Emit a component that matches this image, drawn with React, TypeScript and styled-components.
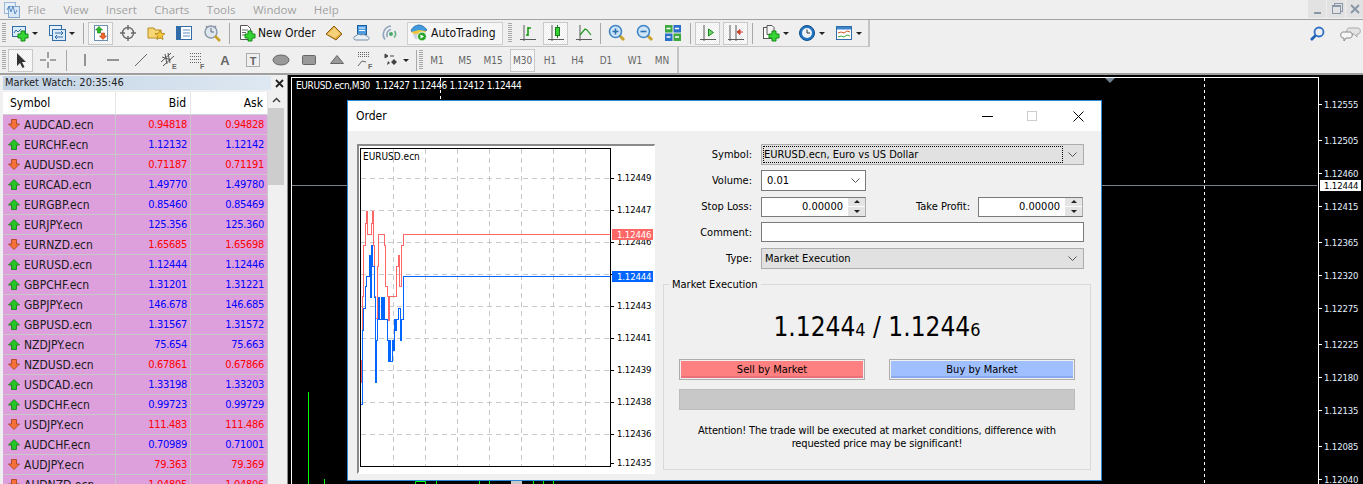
import React from "react";
import styled, { createGlobalStyle } from "styled-components";

const GlobalStyle = createGlobalStyle`
  html, body { margin: 0; padding: 0; background: #000; }
  body {
    font-family: "DejaVu Sans", "Noto Sans", sans-serif;
    font-stretch: condensed;
    font-size: 11px;
    color: #000;
  }
`;

type Quote = { symbol: string; bid: string; ask: string; up: boolean };

const quotes: Quote[] = [
  { symbol: "AUDCAD.ecn", bid: "0.94818", ask: "0.94828", up: false },
  { symbol: "EURCHF.ecn", bid: "1.12132", ask: "1.12142", up: true },
  { symbol: "AUDUSD.ecn", bid: "0.71187", ask: "0.71191", up: false },
  { symbol: "EURCAD.ecn", bid: "1.49770", ask: "1.49780", up: true },
  { symbol: "EURGBP.ecn", bid: "0.85460", ask: "0.85469", up: true },
  { symbol: "EURJPY.ecn", bid: "125.356", ask: "125.360", up: true },
  { symbol: "EURNZD.ecn", bid: "1.65685", ask: "1.65698", up: false },
  { symbol: "EURUSD.ecn", bid: "1.12444", ask: "1.12446", up: true },
  { symbol: "GBPCHF.ecn", bid: "1.31201", ask: "1.31221", up: true },
  { symbol: "GBPJPY.ecn", bid: "146.678", ask: "146.685", up: true },
  { symbol: "GBPUSD.ecn", bid: "1.31567", ask: "1.31572", up: true },
  { symbol: "NZDJPY.ecn", bid: "75.654", ask: "75.663", up: true },
  { symbol: "NZDUSD.ecn", bid: "0.67861", ask: "0.67866", up: false },
  { symbol: "USDCAD.ecn", bid: "1.33198", ask: "1.33203", up: true },
  { symbol: "USDCHF.ecn", bid: "0.99723", ask: "0.99729", up: true },
  { symbol: "USDJPY.ecn", bid: "111.483", ask: "111.486", up: false },
  { symbol: "AUDCHF.ecn", bid: "0.70989", ask: "0.71001", up: true },
  { symbol: "AUDJPY.ecn", bid: "79.363", ask: "79.369", up: false },
  { symbol: "AUDNZD.ecn", bid: "1.04805", ask: "1.04806", up: false },
];

const menus = ["File", "View", "Insert", "Charts", "Tools", "Window", "Help"];
const periods = [
  { label: "M1", w: 28 },
  { label: "M5", w: 28 },
  { label: "M15", w: 28 },
  { label: "M30", w: 25, ml: 3, active: true },
  { label: "H1", w: 28, ml: 1 },
  { label: "H4", w: 27 },
  { label: "D1", w: 30 },
  { label: "W1", w: 28 },
  { label: "MN", w: 26 },
];

const mainAxis = [
  { v: "1.12555", h: 36 },
  { v: "1.12505", h: 33 },
  { v: "1.12460", h: 33 },
  { v: "1.12415", h: 36 },
  { v: "1.12365", h: 33 },
  { v: "1.12320", h: 33 },
  { v: "1.12275", h: 36 },
  { v: "1.12225", h: 33 },
  { v: "1.12180", h: 33 },
  { v: "1.12135", h: 36 },
  { v: "1.12085", h: 33 },
  { v: "1.12040", h: 33 },
];

// the fourth row has no label of its own: the bid tag sits on it
const miniAxis = [
  { v: "1.12449", h: 32 },
  { v: "1.12447", h: 32 },
  { v: "1.12446", h: 32 },
  { v: "", h: 32 },
  { v: "1.12443", h: 32 },
  { v: "1.12441", h: 32 },
  { v: "1.12439", h: 32 },
  { v: "1.12438", h: 32 },
  { v: "1.12436", h: 29 },
  { v: "1.12435", h: 12 },
];

// tick traces, in the 3x coordinates they were read off at
const askTrace =
  "M48 760V690H52V500H56V345H60V280H64V245H67V312H78V280H82V245H85V345H88V500H92V565H96V410H100V312H118V345H122V470H126V500H130V570H134V500H155V410H160V375H164V470H170V345H175V313H797";
const bidTrace =
  "M48 822H53V600H56V535H60V470H64V438H72V375H76V503H79V345H83V408H87V503H90V630H92V758H94V630H97V568H100V503H104V568H108V503H112V568H116V503H119V568H126V630H129V695H133V630H136V695H141V630H144V662H147V568H151V600H155V568H161V535H165V630H170V568H175V439H797";

const Svg = styled.svg`
  display: block;
  flex: none;
`;

const Icon = ({ size = 18, children }: { size?: number; children: React.ReactNode }) => (
  <Svg width={size} height={size} viewBox="0 0 18 18">
    {children}
  </Svg>
);

const Plus = () => (
  <path d="M10 7h4v3h3v4h-3v3h-4v-3H7v-4h3z" fill="#35d535" stroke="#148a14" strokeWidth="1" />
);

const Axes = () => <path d="M5 1v16M1 15.5h16" stroke="#5a5a5a" strokeWidth="1" fill="none" />;

const Lens = ({ children }: { children?: React.ReactNode }) => (
  <>
    <path d="M11 11l5 5" stroke="#c9a227" strokeWidth="3" />
    <circle cx="7.5" cy="7.5" r="6" fill="#cfe4f7" stroke="#3f86c8" strokeWidth="1.6" />
    {children}
  </>
);

const NewChartIcon = () => (
  <Icon>
    <rect x="1.5" y="2.5" width="13" height="10" fill="#dcebf8" stroke="#2f6ca8" />
    <path d="M3 9l2-3 2 2 3-3" stroke="#2f6ca8" fill="none" />
    <Plus />
  </Icon>
);
const ProfilesIcon = () => (
  <Icon>
    <rect x="1.5" y="1.5" width="12" height="10" fill="#e8f1fa" stroke="#2f6ca8" />
    <rect x="4.5" y="5.5" width="13" height="11" fill="#dcebf8" stroke="#2f6ca8" />
    <path d="M7 9h8M7 13h8M13 7l2 2-2 2M9 11l-2 2 2 2" stroke="#2f6ca8" fill="none" />
  </Icon>
);
const WatchIcon = () => (
  <Icon>
    <rect x="2.5" y="1.5" width="13" height="15" fill="#fff" stroke="#6d8fb0" />
    <path d="M7 2.5l3.5 3.5H8.5v3h-3V6H3.5z" fill="#28b828" stroke="#137a13" strokeWidth=".6" />
    <path d="M11 15.5l-3.5-3.5h2V9h3v3h2z" fill="#f2652b" stroke="#b03a10" strokeWidth=".6" />
  </Icon>
);
const NavigatorIcon = () => (
  <Icon>
    <circle cx="9" cy="9" r="5.5" fill="none" stroke="#6a6a6a" strokeWidth="1.4" />
    <path d="M9 1v5M9 12v5M1 9h5M12 9h5" stroke="#6a6a6a" strokeWidth="1.4" />
  </Icon>
);
const FolderStarIcon = () => (
  <Icon>
    <path d="M1 4h6l1 2h6v8H1z" fill="#f7d774" stroke="#b98a1e" />
    <path d="M13 6l1.4 3.3 3.6.3-2.7 2.4.8 3.5-3.1-1.9-3.1 1.9.8-3.5L8 9.6l3.6-.3z" fill="#f5c83c" stroke="#a9811c" strokeWidth=".8" />
  </Icon>
);
const TerminalIcon = () => (
  <Icon>
    <rect x="1.5" y="2.5" width="15" height="13" fill="#fff" stroke="#2f6ca8" />
    <rect x="2" y="3" width="4" height="12" fill="#2f6ca8" />
    <path d="M8 6h7M8 9h7M8 12h7" stroke="#5b8fc4" />
  </Icon>
);
const TesterIcon = () => (
  <Icon>
    <path d="M3 2l2 2M13 2l-2 2" stroke="#8a8f98" strokeWidth="1.5" />
    <circle cx="8" cy="8" r="6" fill="#dfe6ee" stroke="#8a97a8" strokeWidth="1.4" />
    <path d="M8 4v4h3" stroke="#5e6b7a" fill="none" />
    <path d="M12 12l5 5" stroke="#c9a227" strokeWidth="2.6" />
  </Icon>
);
const NewOrderIcon = () => (
  <Icon>
    <path d="M2.5 1.5h7l3 3v11h-10z" fill="#fff" stroke="#555" />
    <path d="M4 6h6M4 8.5h4M4 11h3" stroke="#666" />
    <Plus />
  </Icon>
);
const BookIcon = () => (
  <Icon>
    <path d="M1 10l8-8 8 8-6 6z" fill="#e0a63c" stroke="#8a5b14" />
    <path d="M2.5 10l7-6.5 5.5 6-5 4.5z" fill="#f5d27a" />
  </Icon>
);
const CloudIcon = () => (
  <Icon>
    <rect x="4.5" y="1.5" width="9" height="9" fill="#4b9be0" stroke="#1e5f9e" />
    <path d="M6 4h6M6 6.5h6" stroke="#fff" />
    <path d="M3 16c-3 0-3-4 0-4 1-2 4-2 5-1 2-1 5 0 5 1 4 0 4 4 1 4z" fill="#e6eef6" stroke="#7a8ea3" />
  </Icon>
);
const SignalIcon = () => (
  <Icon>
    <circle cx="10" cy="10" r="2" fill="#4aa86a" />
    <path d="M6.5 13A5 5 0 0 1 10 5.5M4 15.5A8.5 8.5 0 0 1 10 2" stroke="#8fa6bd" strokeWidth="1.6" fill="none" />
    <path d="M13.5 7A5 5 0 0 1 13 13.5" stroke="#62b27f" strokeWidth="1.6" fill="none" />
  </Icon>
);
const RobotIcon = () => (
  <Icon>
    <path d="M1 7c1-4 5-6 8-6s6 2 8 5l-4 3H4z" fill="#3f9bdc" stroke="#1e5f9e" strokeWidth=".7" />
    <path d="M1 8l8-2 7 1-2 3H4z" fill="#f0c63c" />
    <path d="M3 10h8v5H5z" fill="#c9d4de" />
    <circle cx="12" cy="12.5" r="4.5" fill="#2aa52a" stroke="#fff" />
    <path d="M10.5 10.5l3.5 2-3.5 2z" fill="#fff" />
  </Icon>
);
const BarsIcon = () => (
  <Icon>
    <Axes />
    <path d="M9 3v9M9 4h3M9 11H7" stroke="#1b9a1b" strokeWidth="1.6" fill="none" />
  </Icon>
);
const CandleIcon = () => (
  <Icon>
    <Axes />
    <path d="M10.5 1v13" stroke="#1b7a1b" />
    <rect x="8.5" y="3.5" width="4" height="8" fill="#34d034" stroke="#1b7a1b" />
  </Icon>
);
const LineChartIcon = () => (
  <Icon>
    <Axes />
    <path d="M5 11l5-6 2 1 4 5" stroke="#1b9a1b" strokeWidth="1.2" fill="none" />
  </Icon>
);
const ZoomInIcon = () => (
  <Icon>
    <Lens>
      <path d="M4.5 7.5h6M7.5 4.5v6" stroke="#2a6fb0" strokeWidth="1.6" />
    </Lens>
  </Icon>
);
const ZoomOutIcon = () => (
  <Icon>
    <Lens>
      <path d="M4.5 7.5h6" stroke="#2a6fb0" strokeWidth="1.6" />
    </Lens>
  </Icon>
);
const TileIcon = () => (
  <Icon>
    <rect x="1" y="1" width="7.5" height="7.5" fill="#3fa83f" />
    <rect x="9.5" y="1" width="7.5" height="7.5" fill="#2a6fc8" />
    <rect x="1" y="9.5" width="7.5" height="7.5" fill="#2a6fc8" />
    <rect x="9.5" y="9.5" width="7.5" height="7.5" fill="#3fa83f" />
    <path d="M2.5 4.5h4M11 4.5h4M2.5 13h4M11 13h4" stroke="#fff" strokeWidth="1.6" />
  </Icon>
);
const AutoScrollIcon = () => (
  <Icon>
    <Axes />
    <path d="M9.5 5l5 3.5-5 3.5z" fill="#6fd66f" stroke="#1b8a1b" />
  </Icon>
);
const ShiftIcon = () => (
  <Icon>
    <path d="M3 1v16M9 1v16M1 15.5h16" stroke="#5a5a5a" fill="none" />
    <path d="M16 8h-3M13 5.5L10 8l3 2.5z" stroke="#c0392b" fill="#e04a2f" />
  </Icon>
);
const IndicatorIcon = () => (
  <Icon>
    <rect x="1.5" y="3.5" width="9" height="11" fill="#fff" stroke="#555" />
    <path d="M5 1.5h5l2 2v7H5z" fill="#f4f4f4" stroke="#555" />
    <Plus />
  </Icon>
);
const ClockIcon = () => (
  <Icon>
    <circle cx="9" cy="9" r="7.5" fill="#1f74c4" stroke="#124f8a" />
    <circle cx="9" cy="9" r="5" fill="#eef3f8" />
    <path d="M9 5.5V9h3" stroke="#333" fill="none" />
  </Icon>
);
const TemplateIcon = () => (
  <Icon>
    <rect x="1.5" y="2.5" width="15" height="13" fill="#fff" stroke="#2f6ca8" />
    <rect x="2" y="3" width="14" height="2.5" fill="#3e86cc" />
    <path d="M3 9l3-1 3 1 3-2 3 1" stroke="#d05a2c" fill="none" />
    <path d="M3 13l3-1 3 1 3-2 3 1" stroke="#3fa83f" fill="none" />
  </Icon>
);
const PointerIcon = () => (
  <Icon>
    <path d="M5 2v13l3-3 2.5 5 2-1-2.5-5h4z" fill="#333" />
  </Icon>
);
const CrossIcon = () => (
  <Icon>
    <path d="M9 1v6M9 11v6M1 9h6M11 9h6" stroke="#555" />
  </Icon>
);
const VLineIcon = () => (
  <Icon>
    <path d="M9 3v12" stroke="#555" strokeWidth="1.2" />
  </Icon>
);
const HLineIcon = () => (
  <Icon>
    <path d="M3 9h12" stroke="#555" strokeWidth="1.2" />
  </Icon>
);
const TrendIcon = () => (
  <Icon>
    <path d="M3 15L15 3" stroke="#666" />
  </Icon>
);
const LetterIcon = ({ letter, x = 12 }: { letter: string; x?: number }) => (
  <text x={x} y="17.5" fontSize="7" fontWeight="700" fill="#666" fontFamily="Liberation Sans, sans-serif">
    {letter}
  </text>
);
const ChannelIcon = () => (
  <Icon>
    <path d="M1 11L11 2M3 15L14 5M5 3l2 10M8 2l2 10M2 6l9 3" stroke="#555" fill="none" />
    <LetterIcon letter="E" />
  </Icon>
);
const FiboIcon = () => (
  <Icon>
    <path d="M2 2.5h12M2 5.5h12M2 8.5h12M2 11.5h12" stroke="#666" strokeDasharray="1 1" />
    <LetterIcon letter="F" />
  </Icon>
);
const TextIcon = () => (
  <Icon>
    <text x="9" y="14" textAnchor="middle" fontSize="13" fontWeight="700" fill="#666" fontFamily="Liberation Sans, sans-serif">
      A
    </text>
  </Icon>
);
const LabelIcon = () => (
  <Icon>
    <rect x="2.5" y="2.5" width="13" height="13" fill="none" stroke="#666" strokeDasharray="1 1" />
    <text x="9" y="13.5" textAnchor="middle" fontSize="11" fontWeight="700" fill="#666" fontFamily="Liberation Sans, sans-serif">
      T
    </text>
  </Icon>
);
const EllipseIcon = () => (
  <Icon>
    <ellipse cx="9" cy="9" rx="8" ry="5" fill="#999" stroke="#666" />
  </Icon>
);
const RectIcon = () => (
  <Icon>
    <rect x="2.5" y="4.5" width="13" height="9" rx="1" fill="#999" stroke="#666" />
  </Icon>
);
const TriangleIcon = () => (
  <Icon>
    <path d="M9 4.5L15.5 12.5H2.5z" fill="#999" stroke="#666" />
  </Icon>
);
const FanIcon = () => (
  <Icon>
    <path d="M2 1.5h12M2 3.5h12M2 5.5h12" stroke="#666" strokeDasharray="1 1" />
    <path d="M2 15l4-5 4 1" stroke="#666" fill="none" />
    <LetterIcon letter="F" />
  </Icon>
);
const ArrowsIcon = () => (
  <Icon>
    <path d="M3 3l3 2-3 2zM8 5h4" fill="#444" stroke="#444" />
    <path d="M12 8l3 3-3 3-3-3zM8 12l-3 2 1-4z" fill="#444" />
  </Icon>
);
const MagnifierIcon = () => (
  <Icon>
    <circle cx="11" cy="7" r="4.5" fill="none" stroke="#2f6fc8" strokeWidth="1.8" />
    <path d="M7.5 10.5L3 15" stroke="#1f5fb5" strokeWidth="2.6" />
  </Icon>
);
const ChatIcon = () => (
  <Svg width="22" height="16" viewBox="0 0 22 16">
    <path d="M9 2h9c3 0 3 6 0 6h-1v3l-3-3H9C6 8 6 2 9 2z" fill="#e4e4e4" stroke="#a8a8a8" />
    <path d="M3 6h7c3 0 3 6 0 6H6l-2 3v-3H3C0 12 0 6 3 6z" fill="#f6f6f6" stroke="#888" />
  </Svg>
);
const AppIcon = () => (
  <Svg width="16" height="16" viewBox="0 0 16 16">
    <rect x=".5" y=".5" width="11" height="11" fill="#e7eff8" stroke="#9db9d8" />
    <rect x="4.5" y="4.5" width="11" height="11" fill="#d8e6f5" stroke="#86a8cc" />
    <path d="M3 8l2-4 2 6 2-6 2 8 2-4" stroke="#5d8fc4" fill="none" />
  </Svg>
);

const TrendArrow = ({ up }: { up: boolean }) => (
  <Svg width="12" height="11" viewBox="0 0 12 11">
    {up ? (
      <path d="M6 .5L11.5 6H8.5v4.5h-5V6H.5z" fill="#27c427" stroke="#137a13" strokeWidth=".8" />
    ) : (
      <path d="M6 10.5L11.5 5H8.5V.5h-5V5H.5z" fill="#f4713a" stroke="#a83c12" strokeWidth=".8" />
    )}
  </Svg>
);

const Chevron = () => (
  <Svg width="9" height="5" viewBox="0 0 9 5">
    <path d="M.5.5l4 4 4-4" stroke="#555" fill="none" />
  </Svg>
);

const Spinner = () => (
  <Spin>
    <SpinValue>0.00000</SpinValue>
    <SpinButtons>
      <SpinButton>
        <SpinUp />
      </SpinButton>
      <SpinButton>
        <SpinDown />
      </SpinButton>
    </SpinButtons>
  </Spin>
);

const App = () => (
  <Page>
    <GlobalStyle />
    <MenuBar>
      <AppLogo>
        <AppIcon />
      </AppLogo>
      {menus.map((m) => (
        <MenuItem key={m}>{m}</MenuItem>
      ))}
      <WindowButtons>
        <WindowButton>
          <MinGlyph />
        </WindowButton>
        <WindowButton>
          <RestoreGlyph />
        </WindowButton>
        <WindowButton>
          <Svg width="10" height="10" viewBox="0 0 10 10">
            <path d="M1 1l8 8M9 1l-8 8" stroke="#8a97a8" strokeWidth="2" />
          </Svg>
        </WindowButton>
      </WindowButtons>
    </MenuBar>

    <ToolRow>
      <ToolGroup $h={27}>
        <Grip $ml={2} />
        <Tool $w={36} $pl={5}>
          <NewChartIcon />
          <Caret />
        </Tool>
        <Tool $w={36} $pl={6}>
          <ProfilesIcon />
          <Caret />
        </Tool>
        <Sep $ml={5} $mr={4} />
        <Tool $w={25} $active>
          <WatchIcon />
        </Tool>
        <Tool $w={28} $ml={1}>
          <NavigatorIcon />
        </Tool>
        <Tool $w={28}>
          <FolderStarIcon />
        </Tool>
        <Tool $w={28}>
          <TerminalIcon />
        </Tool>
        <Tool $w={28}>
          <TesterIcon />
        </Tool>
        <Sep $ml={3} $mr={3} />
        <Tool $w={87} $pl={5}>
          <NewOrderIcon />
          <ToolLabel $gap={2}>New Order</ToolLabel>
        </Tool>
        <Tool $w={28}>
          <BookIcon />
        </Tool>
        <Tool $w={28}>
          <CloudIcon />
        </Tool>
        <Tool $w={28}>
          <SignalIcon />
        </Tool>
        <AutoButton>
          <RobotIcon />
          <ToolLabel $gap={3}>AutoTrading</ToolLabel>
        </AutoButton>
        <Grip $ml={5} />
        <Tool $w={28} $ml={2}>
          <BarsIcon />
        </Tool>
        <Tool $w={25} $ml={1} $active>
          <CandleIcon />
        </Tool>
        <Tool $w={28} $ml={2}>
          <LineChartIcon />
        </Tool>
        <Sep $ml={2} $mr={2} />
        <Tool $w={28}>
          <ZoomInIcon />
        </Tool>
        <Tool $w={28}>
          <ZoomOutIcon />
        </Tool>
        <Tool $w={28}>
          <TileIcon />
        </Tool>
        <Sep $ml={3} $mr={4} />
        <Tool $w={25} $active>
          <AutoScrollIcon />
        </Tool>
        <Tool $w={25} $ml={3} $active>
          <ShiftIcon />
        </Tool>
        <Sep $ml={4} $mr={2} />
        <Tool $w={36} $pl={7}>
          <IndicatorIcon />
          <Caret />
        </Tool>
        <Tool $w={36} $pl={7}>
          <ClockIcon />
          <Caret />
        </Tool>
        <Tool $w={36} $pl={8}>
          <TemplateIcon />
          <Caret />
        </Tool>
      </ToolGroup>
      <RightTools>
        <MagnifierIcon />
        <ChatIcon />
      </RightTools>
    </ToolRow>

    <ToolRow>
      <ToolGroup $h={26} $noBottom $width={679}>
        <Grip $ml={2} />
        <Tool $w={25} $ml={2} $active>
          <PointerIcon />
        </Tool>
        <Tool $w={28} $ml={1}>
          <CrossIcon />
        </Tool>
        <Sep $ml={4} $mr={4} />
        <Tool $w={28}>
          <VLineIcon />
        </Tool>
        <Tool $w={28}>
          <HLineIcon />
        </Tool>
        <Tool $w={28}>
          <TrendIcon />
        </Tool>
        <Tool $w={28}>
          <ChannelIcon />
        </Tool>
        <Tool $w={28}>
          <FiboIcon />
        </Tool>
        <Tool $w={28}>
          <TextIcon />
        </Tool>
        <Tool $w={28}>
          <LabelIcon />
        </Tool>
        <Tool $w={28}>
          <EllipseIcon />
        </Tool>
        <Tool $w={28}>
          <RectIcon />
        </Tool>
        <Tool $w={28}>
          <TriangleIcon />
        </Tool>
        <Tool $w={28}>
          <FanIcon />
        </Tool>
        <Tool $w={36} $pl={3}>
          <ArrowsIcon />
          <Caret />
        </Tool>
        <Sep $ml={1} $mr={2} />
        <Grip $ml={0} />
        {periods.map((p) => (
          <Tool key={p.label} $w={p.w} $ml={p.ml} $active={p.active}>
            <PeriodLabel>{p.label}</PeriodLabel>
          </Tool>
        ))}
      </ToolGroup>
    </ToolRow>

    <Workspace>
      <MarketWatch>
        <WatchHead>
          <WatchTitle>Market Watch: 20:35:46</WatchTitle>
          <WatchClose>
            <Svg width="9" height="9" viewBox="0 0 9 9">
              <path d="M1 1l7 7M8 1L1 8" stroke="#222" strokeWidth="1.8" />
            </Svg>
          </WatchClose>
        </WatchHead>
        <WatchBody>
          <Table>
            <HeadCell>Symbol</HeadCell>
            <HeadCell $right>Bid</HeadCell>
            <HeadCell $right>Ask</HeadCell>
            {quotes.map((q) => (
              <React.Fragment key={q.symbol}>
                <SymbolCell>
                  <TrendArrow up={q.up} />
                  {q.symbol}
                </SymbolCell>
                <PriceCell $up={q.up}>{q.bid}</PriceCell>
                <PriceCell $up={q.up}>{q.ask}</PriceCell>
              </React.Fragment>
            ))}
          </Table>
          <Scrollbar>
            <ScrollUp>
              <Svg width="9" height="6" viewBox="0 0 9 6">
                <path d="M1 5l3.5-3.5L8 5" stroke="#444" strokeWidth="1.5" fill="none" />
              </Svg>
            </ScrollUp>
            <ScrollThumb />
          </Scrollbar>
        </WatchBody>
      </MarketWatch>

      <ChartWindow>
        <Plot>
          <Svg width="1025" height="407" viewBox="293 78 1025 407">
            <path d="M293 185.5H1318" stroke="#77808a" />
            <path d="M441.5 78V100M1205.5 78V484" stroke="#fff" strokeDasharray="3 3" />
            <path d="M1106 78h10l-5 5z" fill="#708090" />
            <path
              d="M309.5 392V484M325.5 479V484M416.5 484V481.5H426.5V484M437.5 481V484M480.5 481V484M490.5 481V484M534.5 481V484M544.5 481V484M554.5 481V484"
              stroke="#00ff00"
              fill="none"
            />
            <rect x="512" y="481" width="11" height="3" fill="#c8c8c8" />
          </Svg>
          <PlotCaption>EURUSD.ecn,M30&nbsp; 1.12427 1.12446 1.12412 1.12444</PlotCaption>
        </Plot>
        <PriceAxis>
          {mainAxis.map((t) => (
            <AxisRow key={t.v} $h={t.h}>
              {t.v}
            </AxisRow>
          ))}
          <LastPrice>1.12444</LastPrice>
        </PriceAxis>
      </ChartWindow>
    </Workspace>

    <Dialog>
      <TitleBar>
        <DialogTitle>Order</DialogTitle>
        <TitleButton $w={44}>
          <Svg width="11" height="1" viewBox="0 0 11 1">
            <path d="M0 .5h11" stroke="#000" />
          </Svg>
        </TitleButton>
        <TitleButton $w={46}>
          <Svg width="10" height="10" viewBox="0 0 10 10">
            <rect x=".5" y=".5" width="9" height="9" fill="none" stroke="#ccc" />
          </Svg>
        </TitleButton>
        <TitleButton $w={46}>
          <Svg width="11" height="11" viewBox="0 0 11 11">
            <path d="M.5.5l10 10M10.5.5l-10 10" stroke="#000" />
          </Svg>
        </TitleButton>
      </TitleBar>
      <DialogBody>
        <MiniPanel>
          <MiniPlot>
            <MiniCaption>EURUSD.ecn</MiniCaption>
            <Svg width="249" height="317" viewBox="48 57 747 951" shapeRendering="crispEdges">
              <path
                d="M145 57V1008M241 57V1008M337 57V1008M433 57V1008M529 57V1008M625 57V1008M721 57V1008M48 145H795M48 241H795M48 337H795M48 433H795M48 529H795M48 625H795M48 721H795M48 817H795M48 913H795"
                stroke="#c8c8c8"
                strokeWidth="3"
                strokeDasharray="15 12"
                fill="none"
              />
              <path d={askTrace} stroke="#ff6666" strokeWidth="3" fill="none" />
              <path d={bidTrace} stroke="#0066ff" strokeWidth="3" fill="none" />
            </Svg>
          </MiniPlot>
          <MiniAxis>
            {miniAxis.map((t, i) => (
              <MiniTick key={i} $h={t.h}>
                {t.v}
              </MiniTick>
            ))}
            <PriceTag $top={81} $color="#ff6666">
              1.12446
            </PriceTag>
            <PriceTag $top={123} $color="#0066ff">
              1.12444
            </PriceTag>
          </MiniAxis>
        </MiniPanel>

        <OrderColumn>
          <FormGrid>
            <FieldLabel>Symbol:</FieldLabel>
            <Select>
              <FocusText>EURUSD.ecn, Euro vs US Dollar</FocusText>
              <Chevron />
            </Select>
            <FieldLabel>Volume:</FieldLabel>
            <Combo>
              0.01
              <Chevron />
            </Combo>
            <FieldLabel>Stop Loss:</FieldLabel>
            <StopsRow>
              <Spinner />
              <TakeLabel>Take Profit:</TakeLabel>
              <Spinner />
            </StopsRow>
            <FieldLabel>Comment:</FieldLabel>
            <TextInput />
            <FieldLabel>Type:</FieldLabel>
            <Select>
              <PlainText>Market Execution</PlainText>
              <Chevron />
            </Select>
          </FormGrid>

          <GroupBox>
            <GroupLegend>Market Execution</GroupLegend>
            <BigPrice>
              1.1244<small>4</small> / 1.1244<small>6</small>
            </BigPrice>
            <TradeButtons>
              <TradeButton $fill="#ff8080" $edge="#e96f78">
                Sell by Market
              </TradeButton>
              <TradeButton $fill="#a0bfff" $edge="#8aa8ec">
                Buy by Market
              </TradeButton>
            </TradeButtons>
            <ProgressBar />
            <Notice>
              Attention! The trade will be executed at market conditions, difference with
              <br />
              requested price may be significant!
            </Notice>
          </GroupBox>
        </OrderColumn>
      </DialogBody>
    </Dialog>
  </Page>
);

export default App;

const Page = styled.div`
  position: relative;
  width: 1363px;
  height: 484px;
  overflow: hidden;
  display: flex;
  flex-direction: column;
  background: #efefef;
`;

const MenuBar = styled.div`
  height: 19px;
  flex: none;
  display: flex;
  align-items: center;
  gap: 17.5px;
  border-bottom: 1px solid #a3a3a3;
  font-family: "Open Sans", sans-serif;
  font-stretch: normal;
  font-size: 11.5px;
  color: #a2a2a2;
`;

const AppLogo = styled.div`
  margin-left: 4px;
  margin-right: -10px;
  width: 16px;
`;

const MenuItem = styled.span`
  line-height: 19px;
`;

const WindowButtons = styled.div`
  margin-left: auto;
  margin-right: -1px;
  display: flex;
  gap: 1px;
  align-self: flex-start;
`;

const WindowButton = styled.div`
  width: 18px;
  height: 18px;
  background: #e2e2e2;
  display: flex;
  align-items: center;
  justify-content: center;
`;

const MinGlyph = styled.i`
  width: 7px;
  height: 2px;
  margin-top: 7px;
  background: #8a97a8;
`;

const RestoreGlyph = styled.i`
  width: 7px;
  height: 6px;
  border: 1px solid #8a97a8;
  border-top-width: 2px;
  box-shadow: 2px -2px 0 -1px #e2e2e2, 2px -2px 0 0 #8a97a8;
`;

const ToolRow = styled.div`
  display: flex;
  flex: none;
  align-items: stretch;
`;

const ToolGroup = styled.div<{ $h: number; $noBottom?: boolean; $width?: number }>`
  height: ${(p) => p.$h}px;
  width: ${(p) => (p.$width ? `${p.$width}px` : "auto")};
  display: flex;
  align-items: center;
  box-sizing: border-box;
  border-right: 2px solid #c4c4c4;
  border-bottom: ${(p) => (p.$noBottom ? "none" : "1px solid #c4c4c4")};
  padding-right: 5px;
`;

const RightTools = styled.div`
  margin-left: auto;
  display: flex;
  align-items: center;
  gap: 14px;
  padding-right: 1px;
  height: 27px;
`;

const Grip = styled.i<{ $ml: number }>`
  flex: none;
  width: 4px;
  height: 20px;
  margin-left: ${(p) => p.$ml}px;
  background: repeating-linear-gradient(180deg, #a8a8a8 0 1px, transparent 1px 2px);
`;

const Sep = styled.i<{ $ml: number; $mr: number }>`
  flex: none;
  width: 1px;
  height: 21px;
  margin-left: ${(p) => p.$ml}px;
  margin-right: ${(p) => p.$mr}px;
  background: #a8a8a8;
`;

const Tool = styled.div<{ $w: number; $ml?: number; $pl?: number; $active?: boolean }>`
  flex: none;
  box-sizing: border-box;
  width: ${(p) => p.$w}px;
  height: 23px;
  margin-left: ${(p) => p.$ml || 0}px;
  padding-left: ${(p) => p.$pl || 0}px;
  display: flex;
  align-items: center;
  justify-content: ${(p) => (p.$pl ? "flex-start" : "center")};
  ${(p) =>
    p.$active &&
    `
    border: 1px solid #c9c9c9;
    background: repeating-conic-gradient(#fff 0 25%, #ececec 0 50%) 0 0 / 2px 2px;
  `}
`;

const Caret = styled.i`
  flex: none;
  margin-left: 3px;
  width: 0;
  height: 0;
  border-left: 3px solid transparent;
  border-right: 3px solid transparent;
  border-top: 3px solid #222;
`;

const ToolLabel = styled.span<{ $gap: number }>`
  margin-left: ${(p) => p.$gap}px;
  font-size: 12px;
  color: #111;
  white-space: nowrap;
`;

const PeriodLabel = styled.span`
  font-size: 10px;
  color: #666;
`;

const AutoButton = styled.div`
  flex: none;
  box-sizing: border-box;
  width: 96px;
  height: 23px;
  margin-left: 3px;
  padding-left: 2px;
  display: flex;
  align-items: center;
  border: 1px solid #cfcfcf;
  background: #f6f6f6;
`;

const Workspace = styled.div`
  flex: 1;
  min-height: 0;
  display: flex;
  border-top: 2px solid #a0a0a0;
`;

const MarketWatch = styled.div`
  flex: none;
  box-sizing: border-box;
  width: 288px;
  padding: 1px 0 0 3px;
  background: #f0f0f0;
  border-right: 1px solid #8c8c8c;
  overflow: hidden;
`;

const WatchHead = styled.div`
  display: flex;
  align-items: center;
`;

const WatchTitle = styled.div`
  width: 268px;
  height: 14px;
  line-height: 14px;
  padding-left: 2px;
  box-sizing: border-box;
  background: linear-gradient(90deg, #c3d3e4, #dee8f2);
  color: #222;
`;

const WatchClose = styled.div`
  flex: 1;
  display: flex;
  justify-content: center;
`;

const WatchBody = styled.div`
  margin-top: 2px;
  display: flex;
`;

const Table = styled.div`
  width: 265px;
  display: grid;
  grid-template-columns: 113px 75px 77px;
  grid-auto-rows: 20px;
`;

const HeadCell = styled.div<{ $right?: boolean }>`
  height: 23px;
  box-sizing: border-box;
  padding: 0 ${(p) => (p.$right ? "4px" : "0")} 0 ${(p) => (p.$right ? "0" : "7px")};
  display: flex;
  align-items: center;
  justify-content: ${(p) => (p.$right ? "flex-end" : "flex-start")};
  font-size: 12px;
  background: #fff;
  border-right: 1px solid #e6e6e6;
  border-bottom: 1px solid #d0d0d0;
  margin-bottom: -3px;
  z-index: 1;
`;

const BodyCell = styled.div`
  box-sizing: border-box;
  margin-top: 3px;
  height: 20px;
  display: flex;
  align-items: center;
  background: #dda0dd;
  border-right: 1px solid #c8c8c8;
  border-bottom: 1px solid #c8c8c8;
  font-size: 12px;
`;

const SymbolCell = styled(BodyCell)`
  gap: 4px;
  padding-left: 5px;
  color: #1a1a1a;
`;

const PriceCell = styled(BodyCell)<{ $up: boolean }>`
  justify-content: flex-end;
  padding-right: 3px;
  font-size: 11px;
  letter-spacing: -0.3px;
  color: ${(p) => (p.$up ? "#0000ff" : "#ff0000")};
`;

const Scrollbar = styled.div`
  width: 16px;
`;

const ScrollUp = styled.div`
  height: 16px;
  display: flex;
  align-items: center;
  justify-content: center;
`;

const ScrollThumb = styled.div`
  height: 77px;
  background: #cdcdcd;
`;

const ChartWindow = styled.div`
  flex: 1;
  min-width: 0;
  display: flex;
  padding: 2px 0 0 3px;
  background: #000;
`;

const Plot = styled.div`
  position: relative;
  flex: 1;
  min-width: 0;
  border-top: 1px solid #fff;
  border-left: 1px solid #fff;
  border-right: 1px solid #fff;
`;

const PlotCaption = styled.div`
  position: absolute;
  left: 4px;
  top: 1px;
  line-height: 14px;
  font-size: 10px;
  letter-spacing: -0.35px;
  color: #fff;
  white-space: pre;
`;

const PriceAxis = styled.div`
  position: relative;
  flex: none;
  width: 44px;
  padding-top: 21px;
  font-size: 9.5px;
  letter-spacing: -0.15px;
  color: #e4f0ff;
`;

const AxisRow = styled.div<{ $h: number }>`
  height: ${(p) => p.$h}px;
  line-height: 13px;
  padding-left: 5px;
  position: relative;
  &::before {
    content: "";
    position: absolute;
    left: 0;
    top: 6px;
    width: 3px;
    height: 1px;
    background: #fff;
  }
`;

const LastPrice = styled.div`
  position: absolute;
  left: 1px;
  top: 103px;
  width: 41px;
  height: 11px;
  padding-left: 4px;
  box-sizing: border-box;
  background: #fff;
  color: #000;
  line-height: 11px;
`;

const Dialog = styled.div`
  position: absolute;
  left: 347px;
  top: 100px;
  box-sizing: border-box;
  width: 755px;
  height: 381px;
  border: 1px solid #2a8ad6;
  background: #f0f0f0;
`;

const TitleBar = styled.div`
  height: 30px;
  display: flex;
  align-items: center;
  background: #fff;
`;

const DialogTitle = styled.div`
  flex: 1;
  padding-left: 8px;
  font-size: 12px;
`;

const TitleButton = styled.div<{ $w: number }>`
  width: ${(p) => p.$w}px;
  height: 30px;
  display: flex;
  align-items: center;
  justify-content: center;
`;

const DialogBody = styled.div`
  display: flex;
  padding: 13px 0 0 9px;
`;

const MiniPanel = styled.div`
  flex: none;
  box-sizing: border-box;
  width: 298px;
  height: 330px;
  display: flex;
  padding: 2px 0 0 1px;
  background: #fff;
  border-top: 2px solid #8a8a8a;
  border-left: 2px solid #8a8a8a;
  border-right: 1px solid #fff;
  border-bottom: 2px solid #fff;
`;

const MiniPlot = styled.div`
  position: relative;
  flex: none;
  width: 251px;
  height: 319px;
  box-sizing: border-box;
  border: 1px solid #000;
  background: #fff;
`;

const MiniCaption = styled.div`
  position: absolute;
  left: 2px;
  top: 1px;
  line-height: 13px;
  font-size: 10px;
`;

const MiniAxis = styled.div`
  position: relative;
  flex: 1;
  padding-top: 24px;
  font-size: 9.5px;
  letter-spacing: -0.15px;
`;

const MiniTick = styled.div<{ $h: number }>`
  position: relative;
  height: ${(p) => p.$h}px;
  line-height: 12px;
  padding-left: 6px;
  &::before {
    content: "";
    position: absolute;
    left: 0;
    top: 6px;
    width: 3px;
    height: 1px;
    background: #000;
  }
`;

const PriceTag = styled.div<{ $top: number; $color: string }>`
  position: absolute;
  left: 1px;
  top: ${(p) => p.$top}px;
  width: 41px;
  height: 11px;
  padding-left: 5px;
  box-sizing: border-box;
  line-height: 11px;
  background: ${(p) => p.$color};
  color: #fff;
`;

const OrderColumn = styled.div`
  flex: none;
  width: 430px;
  margin-left: 6px;
`;

const FormGrid = styled.div`
  display: grid;
  grid-template-columns: 91px 323px;
  grid-template-rows: repeat(5, 21px);
  column-gap: 9px;
  row-gap: 5px;
  align-items: center;
`;

const FieldLabel = styled.div`
  text-align: right;
  white-space: nowrap;
`;

const Select = styled.div`
  box-sizing: border-box;
  height: 21px;
  display: flex;
  align-items: center;
  gap: 6px;
  padding: 2px 6px 2px 2px;
  background: #e1e1e1;
  border: 1px solid #adadad;
`;

const FocusText = styled.div`
  flex: 1;
  height: 15px;
  line-height: 15px;
  outline: 1px dotted #000;
  white-space: nowrap;
`;

const PlainText = styled.div`
  flex: 1;
  padding-left: 1px;
`;

const Combo = styled.div`
  box-sizing: border-box;
  width: 105px;
  height: 21px;
  display: flex;
  align-items: center;
  justify-content: space-between;
  padding: 0 5px;
  background: #fff;
  border: 1px solid #7a7a7a;
`;

const StopsRow = styled.div`
  display: flex;
  align-items: center;
`;

const Spin = styled.div`
  flex: none;
  box-sizing: border-box;
  width: 105px;
  height: 20px;
  display: flex;
  background: #fff;
  border: 1px solid #7a7a7a;
  border-right-color: #adadad;
`;

const SpinValue = styled.div`
  flex: 1;
  text-align: right;
  padding-right: 5px;
  line-height: 18px;
`;

const SpinButtons = styled.div`
  width: 17px;
  display: flex;
  flex-direction: column;
  gap: 1px;
  background: #fff;
`;

const SpinButton = styled.div`
  flex: 1;
  display: flex;
  align-items: center;
  justify-content: center;
  background: #e4e4e4;
`;

const SpinUp = styled.i`
  border-left: 3px solid transparent;
  border-right: 3px solid transparent;
  border-bottom: 3px solid #222;
`;

const SpinDown = styled.i`
  border-left: 3px solid transparent;
  border-right: 3px solid transparent;
  border-top: 3px solid #222;
`;

const TakeLabel = styled.div`
  width: 112px;
  padding-right: 8px;
  box-sizing: border-box;
  text-align: right;
  white-space: nowrap;
`;

const TextInput = styled.div`
  box-sizing: border-box;
  height: 20px;
  align-self: start;
  background: #fff;
  border: 1px solid #7a7a7a;
`;

const GroupBox = styled.div`
  position: relative;
  box-sizing: border-box;
  margin: 15px 0 0 2px;
  width: 428px;
  height: 186px;
  padding: 28px 15px 0;
  border: 1px solid #d9d9d9;
  display: flex;
  flex-direction: column;
`;

const GroupLegend = styled.div`
  position: absolute;
  left: 5px;
  top: -7px;
  padding: 0 3px;
  line-height: 13px;
  background: #f0f0f0;
`;

const BigPrice = styled.div`
  height: 28px;
  line-height: 28px;
  text-align: center;
  font-size: 26px;
  white-space: nowrap;
  small {
    font-size: 18px;
  }
`;

const TradeButtons = styled.div`
  margin-top: 18px;
  display: flex;
  justify-content: space-between;
`;

const TradeButton = styled.div<{ $fill: string; $edge: string }>`
  box-sizing: border-box;
  width: 186px;
  height: 21px;
  border: 1px solid #adadad;
  padding: 1px;
  display: flex;
  align-items: center;
  justify-content: center;
  background: linear-gradient(${(p) => p.$fill} calc(100% - 2px), ${(p) => p.$edge} 0) content-box;
`;

const ProgressBar = styled.div`
  margin-top: 9px;
  box-sizing: border-box;
  height: 21px;
  background: #c8c8c8;
  border: 1px solid #bdbdbd;
`;

const Notice = styled.div`
  margin-top: 14px;
  text-align: center;
  line-height: 13px;
  letter-spacing: -0.16px;
  white-space: nowrap;
`;
